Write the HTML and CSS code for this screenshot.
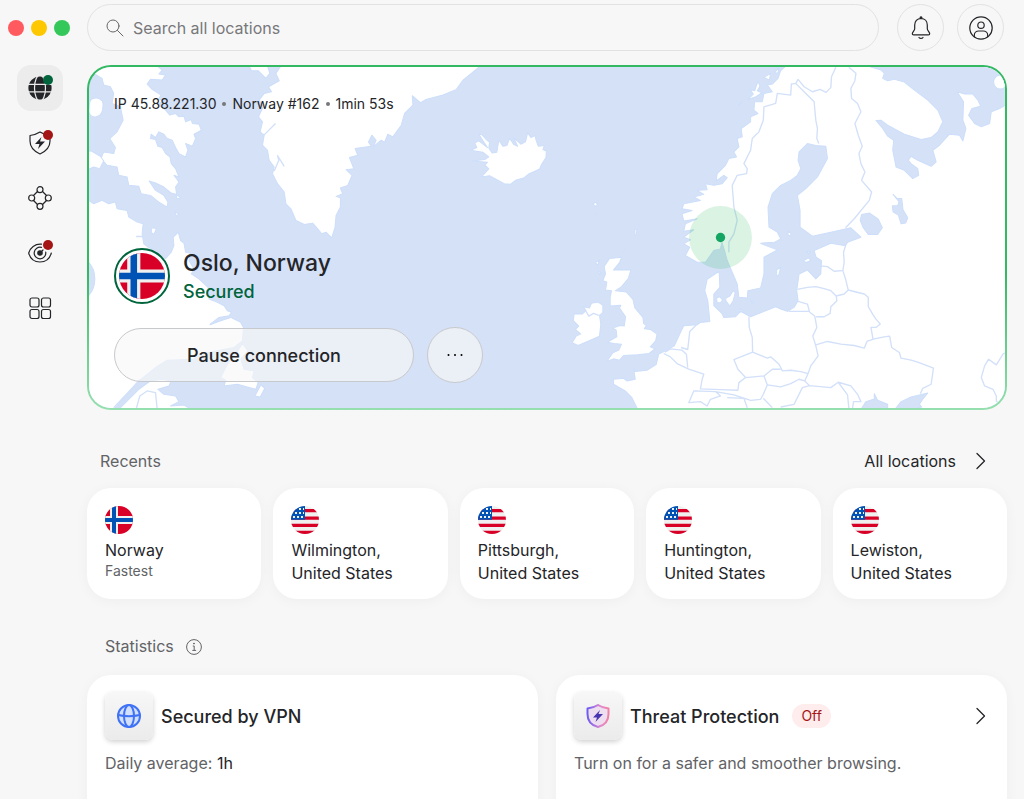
FILE: index.html
```
<!DOCTYPE html>
<html lang="en">

<head>
    <meta charset="UTF-8">
    <meta name="viewport" content="width=device-width, initial-scale=1">
    <title>VPN</title>
    <link rel="stylesheet" href="styles.css">
</head>

<body>
    <!-- shared symbols -->
    <svg class="symbols" aria-hidden="true">
        <clipPath id="round"><circle cx="14" cy="14" r="14"/></clipPath>
        <symbol id="flag-no" viewBox="0 0 28 28">
            <g clip-path="url(#round)">
                <path fill="#d80027" d="M0 0h28v28H0z"/>
                <path fill="#f0f0f0" d="M5 0h8v10h15v8H13v10H5V18H0v-8h5z"/>
                <path fill="#0052b4" d="M7 0h4v12h17v4H11v12H7V16H0v-4h7z"/>
            </g>
        </symbol>
        <symbol id="flag-us" viewBox="0 0 28 28">
            <g clip-path="url(#round)">
                <path fill="#f0f0f0" d="M0 0h28v28H0z"/>
                <path fill="#d80027" d="M0 3h28v3.300H0zM0 10.400h28v3.300H0zM0 17.700h28V21H0zM0 24.700h28V28H0z"/>
                <path fill="#0052b4" d="M0 0h14v13.700H0z"/>
                <path stroke="#f0f0f0" stroke-width="2" stroke-dasharray="2 2" d="M8 3h5M4 7h9M2 11h11"/>
            </g>
        </symbol>
        <symbol id="chevron" viewBox="0 0 24 24">
            <path fill="none" stroke="currentColor" stroke-width="1.300" stroke-linecap="round" stroke-linejoin="round" d="M9 4.500 16.500 12 9 19.500"/>
        </symbol>
    </svg>

    <div class="app">
        <aside class="sidebar">
            <div class="window-controls">
                <button type="button" class="close" aria-label="Close"></button>
                <button type="button" class="minimize" aria-label="Minimize"></button>
                <button type="button" class="maximize" aria-label="Maximize"></button>
            </div>
            <nav class="nav">
                <button type="button" class="nav-item active" aria-label="VPN">
                    <svg class="icon" viewBox="0 0 24 24">
                        <circle cx="12" cy="12" r="11.600" fill="currentColor" stroke="none"/>
                        <g stroke="#ececec">
                            <ellipse cx="12" cy="12" rx="5.500" ry="13"/>
                            <path d="M0 8.300h24M0 15.800h24"/>
                        </g>
                    </svg>
                    <span class="dot green"></span>
                </button>
                <button type="button" class="nav-item" aria-label="Threat Protection">
                    <svg class="icon" viewBox="0 0 24 24">
                        <path d="M12 1C9 3 5 4 2 4.500V10c0 6 4.500 10.500 10 13 5.500-2.500 10-7 10-13V4.500C19 4 15 3 12 1z"/>
                        <path fill="currentColor" stroke="none" d="M13.500 6 7 13h4.500L10 18l7-7.500h-5z"/>
                    </svg>
                    <span class="dot red"></span>
                </button>
                <button type="button" class="nav-item" aria-label="Meshnet">
                    <svg class="icon" viewBox="0 0 24 24">
                        <circle cx="12" cy="3.700" r="3"/>
                        <circle cx="12" cy="20.300" r="3"/>
                        <circle cx="3.700" cy="12" r="3"/>
                        <circle cx="20.300" cy="12" r="3"/>
                        <path d="m5.500 9.500 4-4M14.500 5.500l4 4M18.500 14.500l-4 4M9.500 18.500l-4-4"/>
                    </svg>
                </button>
                <button type="button" class="nav-item" aria-label="Dark Web Monitor">
                    <svg class="icon" viewBox="0 0 24 24">
                        <path d="M13.500 3.200C7 2.500 2 7 .7 12 2 17 6 21 12 21s10-4 11.300-9"/>
                        <path d="M13.500 6.400a5.800 5.800 0 1 0 4.200 4.600M12 12l3-3"/>
                        <circle cx="12" cy="12" r="2.200" fill="currentColor"/>
                    </svg>
                    <span class="dot red"></span>
                </button>
                <button type="button" class="nav-item" aria-label="All products">
                    <svg class="icon" viewBox="0 0 24 24">
                        <rect x="2" y="2" width="9" height="9" rx="2"/>
                        <rect x="13.500" y="2" width="9" height="9" rx="2"/>
                        <rect x="2" y="13.500" width="9" height="9" rx="2"/>
                        <rect x="13.500" y="13.500" width="9" height="9" rx="2"/>
                    </svg>
                </button>
            </nav>
            <button type="button" class="nav-item help" aria-label="Help">
                <svg class="icon" viewBox="0 0 24 24">
                    <circle cx="12" cy="12" r="11.300"/>
                    <path d="M8.300 9.300c0-4 7.400-4 7.400 0 0 2.700-3.500 2.500-3.500 5.200"/>
                    <circle cx="12.200" cy="17.700" r=".5" fill="currentColor"/>
                </svg>
            </button>
        </aside>

        <main class="content">
            <header class="topbar">
                <label class="search">
                    <svg class="search-icon" viewBox="0 0 18 18">
                        <circle cx="7" cy="7" r="6"/>
                        <path d="m11.500 11.500 5.500 5.500"/>
                    </svg>
                    <input type="text" placeholder="Search all locations" aria-label="Search all locations">
                </label>
                <button type="button" class="round-btn" aria-label="Notifications">
                    <svg class="icon" viewBox="0 0 24 24">
                        <path d="M12 2.500c-4 0-6.300 2.800-6.300 6.600v3.700c0 1.800-2.400 3.200-2.400 4.900 0 .8.500 1.200 1.300 1.200h14.800c.8 0 1.300-.4 1.300-1.200 0-1.700-2.400-3.100-2.400-4.900V9.100c0-3.800-2.300-6.600-6.300-6.600z"/>
                        <path d="M10 21.500c.8 1.200 3.200 1.200 4 0"/>
                        <circle cx="12" cy="1.700" r=".9" fill="currentColor"/>
                    </svg>
                </button>
                <button type="button" class="round-btn" aria-label="Account">
                    <svg class="icon" viewBox="0 0 24 24">
                        <circle cx="12" cy="12" r="11.200"/>
                        <circle cx="12" cy="9.200" r="3.200"/>
                        <path d="M5.300 20.700v-1.500c0-2.500 2-4.200 4.500-4.200h4.400c2.500 0 4.500 1.700 4.500 4.200v1.500"/>
                    </svg>
                </button>
            </header>

            <!-- connection card -->
            <section class="map-card">
                <svg class="map" viewBox="12 21 2748 1020" preserveAspectRatio="xMidYMid slice" aria-hidden="true">
                    <!-- Baffin Island, Labrador, Newfoundland -->
                    <g class="land">
                        <path d="M40 18 30 40 55 55 60 75 80 80 90 100 85 130 110 140 118 180 100 215 78 235 95 262 90 280 60 275 52 295 70 315 100 320 105 345 130 350 135 375 165 378 172 400 200 405 225 425 250 440 252 425 240 405 215 390 196 362 215 368 240 380 262 398 278 402 275 380 285 365 270 345 285 350 275 325 262 310 258 290 245 280 235 262 222 258 215 238 200 235 202 222 215 232 225 215 240 222 250 235 265 240 275 262 285 280 305 290 312 270 305 250 325 258 335 235 330 222 352 210 345 192 325 190 322 178 305 185 300 168 285 170 275 160 258 165 245 150 220 132 238 125 225 115 232 105 205 88 190 72 200 58 235 60 245 45 225 42 235 30 220 18z"/>
                        <path d="M26 116c16-6 34 2 32 18 0 14-4 34-20 36-16 4-24-10-22-22 2-10-2-26 10-32z"/>
                        <path d="M8 275 22 272 50 288 60 302 48 325 30 320 8 330z"/>
                        <path d="M8 415 30 430 55 420 75 430 95 425 100 445 130 450 135 470 160 485 178 490 175 520 180 550 200 565 230 590 245 594 262 575 270 555 268 530 283 515 290 540 300 548 305 575 320 578 315 600 330 625 322 640 345 655 372 680 375 715 400 725 420 735 430 750 442 755 435 765 405 770 378 792 410 780 440 770 470 785 478 800 475 840 450 860 400 870 350 880 330 895 250 898 215 920 165 960 130 1000 90 1045 8 1045z"/>
                        <path d="M105 1045 165 985 200 960 235 955 262 960 255 975 222 985 240 1000 275 1005 285 1022 260 1035 300 1032 322 1045z"/>
                        <path d="M475 848 455 880 430 910 410 950 425 958 420 975 460 970 495 980 515 985 522 965 505 950 510 930 480 925 470 895 492 870z"/>
                        <path d="M530 972 542 982 528 1008 512 1005zM204 502 218 504 210 522 202 516zM272 452 284 462 278 468zM276 402 290 412 280 416z"/>
                    </g>
                    <path class="water" d="M8 598c34 30 34 84 0 114z"/>
                    <path class="border" d="M158 1041 168 1005 190 990 215 995 220 1045M90 1040 170 955M157 528 178 528M380 790 405 772"/>

                    <!-- Greenland -->
                    <g class="land">
                        <path d="M590 18 575 40 585 62 553 80 562 95 540 100 525 120 537 140 523 170 535 185 528 215 540 225 535 255 550 270 555 300 570 320 565 340 580 370 600 395 605 430 620 445 635 480 660 492 685 488 700 505 712 520 725 515 742 532 752 500 755 465 768 440 768 412 755 408 775 400 768 383 790 375 803 345 785 328 808 325 795 292 820 285 812 265 860 258 852 245 862 225 875 240 866 260 890 240 900 246 910 222 925 230 950 195 960 160 985 135 983 107 1008 128 1024 118 1075 105 1115 88 1135 60 1180 24 1182 18z"/>
                        <path d="M495 18 502 32 522 32 545 55 557 40 550 18z"/>
                    </g>
                    <path class="border" d="M534 230 574 190M570 332 584 300 580 286 600 318"/>

                    <!-- Iceland -->
                    <path class="land" d="M1182 222 1192 224 1204 238 1214 246 1212 264 1222 278 1236 276 1242 240 1254 258 1266 256 1274 234 1286 252 1298 258 1286 232 1308 252 1322 244 1328 218 1338 232 1350 226 1354 242 1360 258 1378 256 1374 268 1384 272 1383 292 1370 312 1364 326 1330 342 1318 352 1292 360 1276 372 1258 370 1232 356 1214 346 1190 350 1212 326 1200 314 1208 306 1162 302 1200 298 1212 290 1194 276 1158 270 1176 262 1170 248 1182 242 1208 262 1196 244z"/>

                    <g transform="translate(1395 0)">
                        <!-- British Isles -->
                        <g class="land">
                            <path d="M178 594 214 590 208 606 190 628 242 628 234 654 214 678 196 690 228 694 248 716 254 742 278 770 280 788 288 794 282 804 300 806 320 820 316 840 300 858 314 864 296 878 262 882 220 884 208 898 190 894 170 902 188 876 206 868 214 850 192 848 172 844 200 828 198 808 188 802 210 794 222 796 226 768 208 742 212 734 180 736 180 710 184 690 166 688 170 664 158 660 166 640 162 618z"/>
                            <path d="M72 760 96 760 108 750 100 738 118 742 124 728 144 724 158 734 158 756 148 764 152 790 148 826 112 842 84 854 66 846 78 826 92 820 76 806 86 796 70 780z"/>
                            <path d="M136 606 148 598 142 614zM128 430 138 426 142 432 136 438zM254 506 260 506 258 524 254 522zM144 632 152 636 148 642z"/>
                        </g>
                        <path class="border" d="M108 752 116 766 130 758 146 764M268 490 258 508M230 558 218 578M140 654 152 668M134 455 140 466"/>

                        <!-- mainland -->
                        <path class="land" d="M705 18 690 32 682 55 665 72 650 75 665 95 640 100 635 125 612 125 610 150 622 160 600 170 600 185 572 205 575 230 560 235 565 260 550 275 558 290 535 295 525 315 500 340 497 362 520 345 530 352 515 370 490 375 465 370 470 388 440 390 460 402 430 410 450 420 400 430 395 445 425 450 395 460 400 482 440 475 405 490 400 512 430 508 400 530 420 538 400 550 418 560 405 585 440 605 465 605 490 570 510 565 514 545 522 570 530 600 560 670 565 710 590 712 592 690 630 682 640 640 640 590 680 568 640 553 630 548 672 545 690 535 680 515 655 500 652 440 665 400 690 375 720 360 740 345 750 325 742 300 745 275 770 250 795 256 825 258 830 295 800 350 765 385 740 405 748 450 748 500 785 527 840 515 900 502 930 530 890 545 884 556 840 548 790 570 796 590 812 600 810 640 795 655 770 628 745 640 738 690 742 720 730 740 710 752 690 745 675 738 600 768 585 760 570 752 555 768 520 770 514 758 490 735 490 700 508 680 506 632 470 656 463 690 472 720 478 782 450 785 440 792 400 795 388 820 372 855 345 870 325 880 318 910 290 928 255 932 250 922 255 955 230 960 220 952 190 955 190 970 225 990 245 1010 262 1045H1384V18z"/>
                        <g class="land">
                            <path d="M498 712 508 708 516 718 510 726 500 726zM526 712 538 706 548 690 554 696 548 720 538 736 526 720zM678 628 690 620 684 644 678 646zM568 744 576 748 570 754zM600 720 610 724 606 728zM712 512 718 516 712 520z"/>
                            <path d="M598 88 612 92 622 64 628 78 620 92 634 98 616 110 592 118 608 102zM576 124 562 138M640 52 660 40 656 60zM670 40 685 22 682 38z"/>
                        </g>

                        <!-- Barents and White Sea -->
                        <path class="water" d="M950 18 990 30 1000 40 995 55 1010 62 1030 58 1060 66 1090 90 1130 120 1160 150 1175 185 1160 215 1140 232 1110 238 1060 222 1010 195 990 180 975 181 995 205 1010 228 1028 240 1025 270 1035 320 1060 330 1085 355 1103 345 1100 325 1080 310 1072 300 1080 288 1100 300 1140 318 1155 305 1145 270 1165 255 1195 222 1225 225 1235 242 1244 205 1235 180 1237 125 1218 95 1240 102 1265 102 1280 120 1288 138 1262 145 1252 165 1270 190 1290 200 1315 190 1320 155 1345 145 1384 122V18z"/>
                        <ellipse class="land" cx="1347" cy="66" rx="20" ry="21"/>

                        <!-- lakes and the Black Sea -->
                        <path class="water" d="M932 462 956 458 982 476 994 502 980 522 952 522 936 500 928 480zM1026 402 1038 414 1052 414 1056 448 1070 472 1064 488 1050 490 1042 464 1026 454 1024 436 1040 436 1044 424zM930 1045 945 1022 970 1014 970 998 980 1018 1010 1030 1010 1045zM1032 1045 1050 1022 1080 1008 1130 996 1115 1015 1105 1030 1112 1038 1085 1045z"/>
                        <path class="land" d="M758 600 774 592 780 600 766 606zM768 574 780 574 774 580zM710 520 716 514 722 522 716 526z"/>

                        <!-- northern borders -->
                        <g class="border">
                            <path d="M722 70 720 105 680 100 675 130 640 140 638 180 625 215 605 235 600 270 580 310 590 325 588 340 560 345 545 375 550 440 560 480 550 520 535 545 535 575M720 105 722 72 735 70 760 95 790 125 795 180 800 205 798 235 804 250M735 70 742 58 760 80 785 95 808 88 826 97 840 82 842 50 855 22M894 22 915 40 912 62 900 85 902 115 920 130 930 155 912 190 922 225 934 258 924 280 930 310 942 335 932 360 962 395 955 420 910 475 884 502"/>
                            <path d="M884 556 878 575 880 605 876 630 884 655 892 688M810 616 830 618 850 632 874 630M740 686 770 680 795 678 820 684 840 690 856 706 880 700 892 688 915 694 940 700 952 710 952 738 965 760 975 775 988 790 975 800 960 800 966 834M856 706 858 720 840 738 838 758 820 768 796 768M742 722 770 730 776 752 714 752M776 754 792 766 798 800 786 826 795 855 802 885 780 915 772 938 762 960"/>
                            <path d="M795 852 830 842 870 850 910 854 940 862 948 842 970 834 1000 828 1016 826 1022 860 1045 875 1050 892 1080 898 1100 904 1147 922 1140 970 1115 982 1108 998"/>
                        </g>
                        <!-- central and eastern borders -->
                        <g class="border">
                            <path d="M1384 862 1355 880 1335 912 1312 895 1300 915 1290 950 1300 975 1325 985 1335 1005 1335 1020 1355 1040M595 768 596 800 605 830 606 874 550 896 562 925 585 950 565 965 562 988 510 986 450 984 455 955 460 940 415 925 380 908 360 888 340 878M344 874 360 864 395 868 408 880 412 920M392 860 412 866 418 812 438 792M606 874 650 892 660 888 685 910 695 930 720 928 750 932 772 938"/>
                            <path d="M585 950 640 945 665 925 690 925M640 945 650 972 690 978 720 968 745 955 762 960 776 974M650 972 638 1000 630 1015 600 1018 550 1002 495 992 430 990 415 1025 450 1022 470 1035 480 1015 510 1005 495 992M530 1010 580 1012 590 1040M638 1012 665 1040M690 1038 730 1030 755 980 776 974 840 980 862 964 900 975 920 1000 930 1022 908 1022 905 1042M862 964 890 1002 894 1042"/>
                        </g>
                        <circle cx="510" cy="531" r="94" fill="#22b859" fill-opacity=".17"/>
                        <circle cx="510" cy="531" r="14" fill="#14a562"/>
                    </g>
                </svg>

                <div class="map-content">
                    <p class="session">
                        <span>IP 45.88.221.30</span>
                        <span class="sep"></span>
                        <span>Norway #162</span>
                        <span class="sep"></span>
                        <span>1min 53s</span>
                    </p>
                    <div class="location">
                        <span class="flag-ring"><svg><use href="#flag-no"/></svg></span>
                        <div>
                            <h1>Oslo, Norway</h1>
                            <p class="secured">Secured</p>
                        </div>
                    </div>
                    <div class="actions">
                        <button type="button" class="pause">Pause connection</button>
                        <button type="button" class="more" aria-label="More options">
                            <svg viewBox="0 0 18 18"><circle cx="2.500" cy="9" r="1"/><circle cx="9" cy="9" r="1"/><circle cx="15.500" cy="9" r="1"/></svg>
                        </button>
                    </div>
                </div>
            </section>

            <section>
                <div class="section-head recents-head">
                    <h2>Recents</h2>
                    <a href="#" class="all-link">All locations <svg class="chevron"><use href="#chevron"/></svg></a>
                </div>
                <div class="recents">
                    <button type="button" class="recent"><svg class="flag"><use href="#flag-no"/></svg><span>Norway</span><small>Fastest</small></button>
                    <button type="button" class="recent"><svg class="flag"><use href="#flag-us"/></svg><span>Wilmington,<br>United States</span></button>
                    <button type="button" class="recent"><svg class="flag"><use href="#flag-us"/></svg><span>Pittsburgh,<br>United States</span></button>
                    <button type="button" class="recent"><svg class="flag"><use href="#flag-us"/></svg><span>Huntington,<br>United States</span></button>
                    <button type="button" class="recent"><svg class="flag"><use href="#flag-us"/></svg><span>Lewiston,<br>United States</span></button>
                </div>
            </section>

            <section>
                <div class="section-head stats-head">
                    <h2>Statistics</h2>
                    <svg class="info" viewBox="0 0 16 16">
                        <circle cx="8" cy="8" r="7.400"/>
                        <path d="M6.800 7H8.200v4.300M6.300 11.400h3.800"/>
                        <circle cx="8" cy="4.600" r=".5" fill="currentColor"/>
                    </svg>
                </div>
                <div class="stats">
                    <article class="stat">
                        <div class="stat-head">
                            <span class="tile">
                                <svg viewBox="0 0 24 24" fill="#d3e0fb" stroke="#4072f5" stroke-width="2">
                                    <circle cx="12" cy="12" r="11"/>
                                    <ellipse cx="12" cy="12" rx="5" ry="11"/>
                                    <path fill="none" d="M1 11c7 1.500 15 1.500 22 0"/>
                                </svg>
                            </span>
                            <h3>Secured by VPN</h3>
                        </div>
                        <p>Daily average: <b>1h</b></p>
                    </article>
                    <article class="stat">
                        <div class="stat-head">
                            <span class="tile">
                                <svg viewBox="0 0 24 24">
                                    <linearGradient id="shield">
                                        <stop offset="0" stop-color="#6c5cf5"/>
                                        <stop offset=".65" stop-color="#e48acb"/>
                                        <stop offset="1" stop-color="#f37fa5"/>
                                    </linearGradient>
                                    <path fill="#eedff0" stroke="url(#shield)" stroke-width="2" stroke-linejoin="round" d="M12 1C9 3 5 4 1.500 4.500V10c0 7 4.500 11.500 10.500 13 6-1.500 10.500-6 10.500-13V4.500C19 4 15 3 12 1z"/>
                                    <path fill="#4a35b0" d="m14 6-7 7.500h4L9.500 18l7.500-8h-4.500z"/>
                                </svg>
                            </span>
                            <h3>Threat Protection</h3>
                            <span class="badge">Off</span>
                            <svg class="chevron"><use href="#chevron"/></svg>
                        </div>
                        <p>Turn on for a safer and smoother browsing.</p>
                    </article>
                </div>
            </section>
        </main>
    </div>
</body>

</html>
```
FILE: styles.css
```
* {
    box-sizing: border-box;
}

body {
    margin: 0;
    background: #f7f7f7;
    color: #242528;
    font-family: Inter, "Liberation Sans", sans-serif;
    font-size: 16px;
    line-height: 23px;
}

h1,
h2,
h3,
p {
    margin: 0;
    font-weight: 400;
}

button,
input {
    font: inherit;
    color: inherit;
    border: 0;
    padding: 0;
    background: none;
}

.symbols {
    position: absolute;
    width: 0;
    height: 0;
}

/* page shell */
.app {
    display: grid;
    grid-template-columns: 80px 1fr;
    height: 100vh;
    overflow: hidden;
}

.content {
    min-width: 0;
    padding: 4px 17px 0 7px;
}

.icon {
    width: 24px;
    height: 24px;
    fill: none;
    stroke: currentColor;
    stroke-width: 1.2;
    stroke-linecap: round;
    stroke-linejoin: round;
}

/* sidebar */
.sidebar {
    display: flex;
    flex-direction: column;
    align-items: center;
    padding-bottom: 23px;
}

.window-controls {
    display: flex;
    gap: 7px;
    align-self: flex-start;
    padding: 20px 0 29px 8px;
}

.window-controls button {
    width: 16px;
    height: 16px;
    border-radius: 50%;
}

.close {
    background: #ff5a5f;
}

.minimize {
    background: #fdc800;
}

.maximize {
    background: #34c759;
}

.nav {
    display: flex;
    flex-direction: column;
    gap: 9px;
}

.nav-item {
    display: flex;
    align-items: center;
    justify-content: center;
    position: relative;
    width: 46px;
    height: 46px;
    border-radius: 14px;
}

.nav-item.active {
    background: #ececec;
}

.help {
    margin-top: auto;
}

.dot {
    position: absolute;
    top: 10px;
    right: 10px;
    width: 10px;
    height: 10px;
    border-radius: 50%;
}

.green {
    background: #00643c;
}

.red {
    background: #a41515;
}

/* top bar */
.topbar {
    display: flex;
    gap: 13px;
    padding-right: 3px;
}

.search {
    display: flex;
    flex: 1;
    align-items: center;
    gap: 9px;
    height: 47px;
    margin-right: 5px;
    padding: 1px 18px 0;
    border: 1px solid #e2e2e3;
    border-radius: 24px;
}

.search input {
    flex: 1;
    min-width: 0;
    outline: none;
}

.search input::placeholder {
    color: #77787b;
    opacity: 1;
}

.search-icon {
    width: 18px;
    height: 18px;
    fill: none;
    stroke: #66676a;
    stroke-linecap: round;
}

.round-btn {
    display: flex;
    align-items: center;
    justify-content: center;
    width: 47px;
    height: 47px;
    border: 1px solid #e2e2e3;
    border-radius: 50%;
}

/* map card */
.map-card {
    position: relative;
    min-height: 344px;
    margin-top: 14px;
    padding: 27px;
    border-radius: 24px;
    background: linear-gradient(#32b962 0%, #32b962 60%, #96dfaf 100%);
}

.map {
    position: absolute;
    top: 2px;
    left: 2px;
    width: calc(100% - 4px);
    height: calc(100% - 4px);
    border-radius: 22px;
    background: #d5e1f7;
}

.land {
    fill: #fff;
    stroke: #ccdefa;
    stroke-width: 3;
    stroke-linejoin: round;
}

.water {
    fill: #d5e1f7;
    stroke: #ccdefa;
    stroke-width: 3;
    stroke-linejoin: round;
}

.border {
    fill: none;
    stroke: #d2e0f9;
    stroke-width: 4;
    stroke-linejoin: round;
}

.map-content {
    position: relative;
}

.session {
    display: flex;
    align-items: center;
    gap: 6px;
    font-size: 14px;
}

.sep {
    width: 4px;
    height: 4px;
    border-radius: 50%;
    background: #77787b;
}

.location {
    display: flex;
    align-items: center;
    gap: 13px;
    margin-top: 132px;
}

.flag-ring {
    width: 56px;
    height: 56px;
    padding: 3px;
    border: 2px solid #00643c;
    border-radius: 50%;
    background: #fff;
}

.flag-ring svg {
    display: block;
    width: 46px;
    height: 46px;
}

h1 {
    font-size: 23px;
    line-height: 32px;
    font-weight: 500;
}

.secured {
    font-size: 18px;
    line-height: 26px;
    font-weight: 500;
    color: #00643c;
}

.actions {
    display: flex;
    align-items: center;
    gap: 13px;
    margin-top: 22px;
}

.pause,
.more {
    border: 1px solid #c8c9cc;
    background: rgba(247, 247, 247, .65);
}

.pause {
    width: 300px;
    height: 54px;
    border-radius: 27px;
    font-size: 18px;
    font-weight: 500;
}

.more {
    width: 56px;
    height: 56px;
    border-radius: 50%;
}

.more svg {
    display: block;
    width: 18px;
    height: 18px;
    margin: auto;
}

/* recents */
.section-head {
    display: flex;
    align-items: center;
    color: #626366;
}

h2 {
    font-size: 16px;
}

.recents-head {
    justify-content: space-between;
    padding: 39px 15px 15px 13px;
}

.all-link {
    display: flex;
    align-items: center;
    gap: 12px;
    color: #242528;
    text-decoration: none;
}

.chevron {
    width: 24px;
    height: 24px;
    color: #242528;
}

.recents {
    display: grid;
    grid-template-columns: repeat(5, 1fr);
    gap: 12px;
}

.recent,
.stat {
    border-radius: 24px;
    background: #fff;
    box-shadow: 0 2px 14px rgba(0, 0, 0, .04);
}

.recent {
    display: flex;
    flex-direction: column;
    align-items: flex-start;
    min-height: 111px;
    padding: 18px 18px 14px;
    text-align: left;
}

.flag {
    width: 28px;
    height: 28px;
    margin-bottom: 5px;
}

.recent small {
    font-size: 14px;
    line-height: 18px;
    color: #626366;
}

/* statistics */
.stats-head {
    gap: 12px;
    padding: 36px 18px 17px;
}

.info {
    width: 16px;
    height: 16px;
    fill: none;
    stroke: currentColor;
    overflow: visible;
}

.stats {
    display: grid;
    grid-template-columns: 1fr 1fr;
    gap: 18px;
}

.stat {
    min-height: 200px;
    padding: 17px 18px;
}

.stat-head {
    display: flex;
    align-items: center;
    margin-bottom: 12px;
}

.tile {
    display: flex;
    align-items: center;
    justify-content: center;
    width: 48px;
    height: 48px;
    margin-right: 8px;
    border-radius: 8px;
    background: linear-gradient(#f7f7f7, #ebebeb);
    box-shadow: 0 2px 5px rgba(0, 0, 0, .18);
}

.tile svg {
    width: 24px;
    height: 24px;
}

h3 {
    font-size: 18px;
    font-weight: 500;
}

.badge {
    margin-left: 13px;
    padding: 0 9px;
    border-radius: 12px;
    background: #ffeded;
    color: #a41515;
    font-size: 14px;
    line-height: 24px;
}

.stat-head .chevron {
    margin-left: auto;
    margin-right: -3px;
}

.stat p {
    color: #626366;
}

.stat b {
    font-weight: 400;
    color: #242528;
}
```
